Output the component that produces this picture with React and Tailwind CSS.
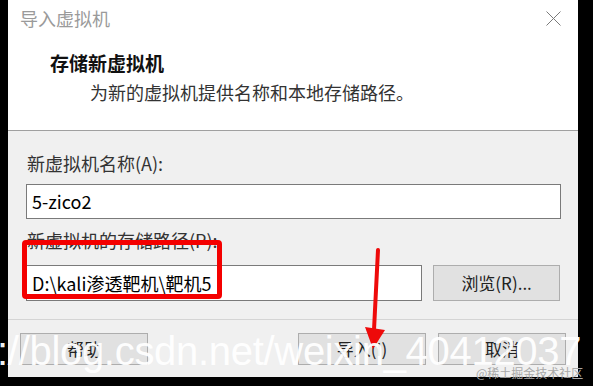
import React from 'react'

const CJK = "font-['Noto_Sans_CJK_SC','Noto_Sans',sans-serif]"

function CloseIcon() {
  return (
    <svg width="15" height="15" viewBox="0 0 15 15" fill="none">
      <path d="M0.5 0.5L14.5 14.5M14.5 0.5L0.5 14.5" stroke="#7a7a7a" strokeWidth="1" />
    </svg>
  )
}

function Button({ children, className = '' }) {
  return (
    <div
      className={`w-[128px] h-[32px] flex items-center justify-center bg-[#e1e1e1] border border-[#adadad] text-[17px] text-[#222] ${className}`}
    >
      {children}
    </div>
  )
}

export default function App() {
  return (
    <div className={`relative w-[593px] h-[386px] bg-black overflow-hidden ${CJK}`}>
      {/* dialog */}
      <div className="ml-[8px] w-[570px] h-[377px] flex flex-col bg-[#f0f0f0]">
        {/* header */}
        <div className="h-[131px] bg-white border-b border-[#a0a0a0]">
          <div className="h-[36px] flex items-center justify-between pl-[12px] pr-[17px]">
            <span className="text-[18px] leading-[24px] text-[#9a9a9a]">导入虚拟机</span>
            <CloseIcon />
          </div>
          <div className="mt-[15px] pl-[42px] text-[19px] leading-[24px] font-bold text-[#111]">
            存储新虚拟机
          </div>
          <div className="mt-[5px] pl-[82px] text-[18px] leading-[24px] text-[#333]">
            为新的虚拟机提供名称和本地存储路径。
          </div>
        </div>

        {/* body */}
        <div className="px-[18px] pt-[20px]">
          <div className="pl-[1px] text-[18px] leading-[24px] text-[#333]">新虚拟机名称(A):</div>
          <div className="mt-[9px] w-[535px] h-[35px] bg-white border border-[#7a7a7a] flex items-center pl-[5px] text-[18px] text-black">
            5-zico2
          </div>
          <div className="mt-[9px] pl-[1px] text-[18px] leading-[24px] text-[#333]">新虚拟机的存储路径(P):</div>
          <div className="mt-[13px] flex items-center">
            <div className="w-[400px] h-[36px] bg-white border border-[#7a7a7a] flex items-center pl-[5px] text-[18px] text-black">
              D:\kali渗透靶机\靶机5
            </div>
            <Button className="ml-[11px] w-[122px] h-[36px]">浏览(R)...</Button>
          </div>
        </div>

        <div className="mt-[18px] h-px bg-[#d4d4d4]" />

        {/* footer */}
        <div className="flex items-center px-[12px] mt-[13px]">
          <Button>帮助</Button>
          <Button className="ml-auto">导入(I)</Button>
          <Button className="ml-[12px]">取消</Button>
        </div>
      </div>

      {/* red annotation box */}
      <div className="absolute left-[22px] top-[240px] w-[200px] h-[59px] border-[5px] border-[#f40000] rounded-[4px]" />

      {/* red arrow */}
      <svg className="absolute left-0 top-0" width="593" height="386" viewBox="0 0 593 386">
        <path d="M378 250 L373.5 340" stroke="#ee0a0a" strokeWidth="4" strokeLinecap="round" fill="none" />
        <path d="M365 327 L373 349 L385 330 Z" fill="#ee0a0a" />
      </svg>

      {/* watermarks */}
      <div className="absolute left-[-3px] top-[331px] font-['Liberation_Sans',Arial,sans-serif] text-[40px] leading-[40px] tracking-[-0.3px] text-white/95 whitespace-nowrap">
        ://blog.csdn.net/weixin_40412037
      </div>
      <div className="absolute left-[476px] top-[365px] text-[12px] leading-[16px] text-[#a8a8a8] whitespace-nowrap">
        @稀土掘金技术社区
      </div>
    </div>
  )
}
